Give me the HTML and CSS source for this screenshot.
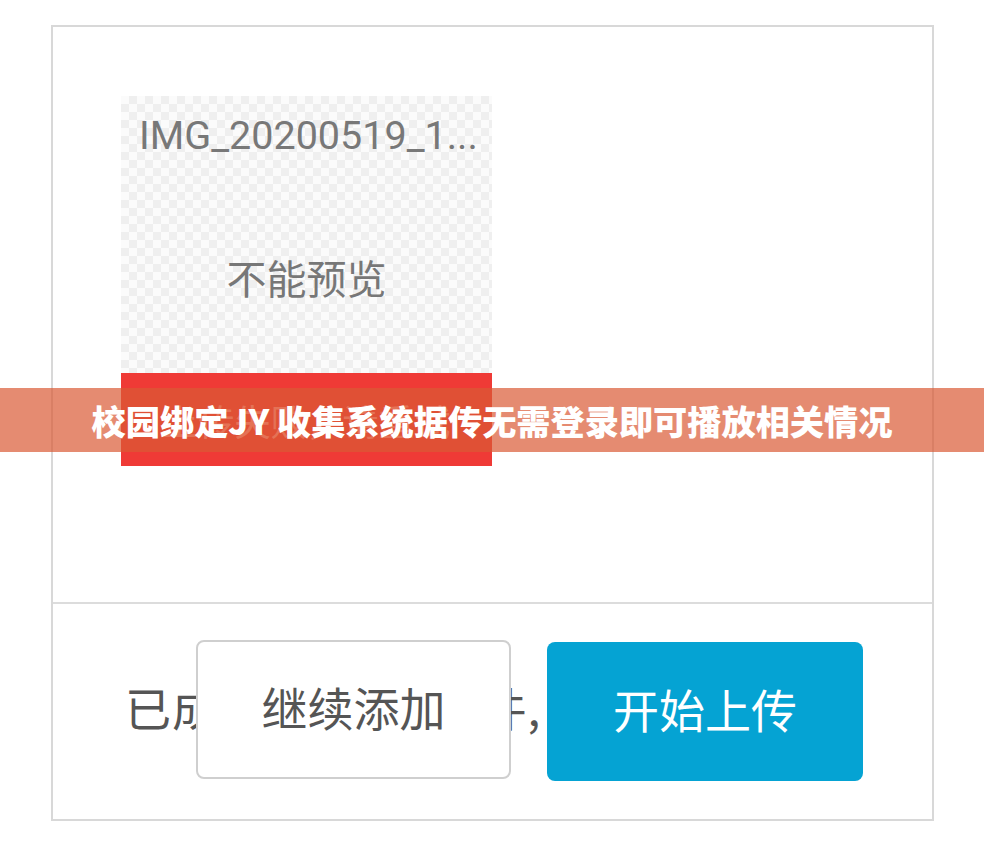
FILE: index.html
```html
<!DOCTYPE html>
<html lang="zh">
<head>
<meta charset="utf-8">
<title>上传</title>
<link rel="stylesheet" href="styles.css">
</head>
<body>
<div class="card">
  <div class="card-top">
    <div class="thumb">
      <div class="thumb-name">IMG_20200519_1...</div>
      <div class="thumb-preview">不能预览</div>
      <div class="thumb-error">上传失败，请重试</div>
    </div>
  </div>
  <div class="divider"></div>
  <div class="card-bottom">
    <span class="status">已成功添加1个文件,</span>
    <button class="btn btn-primary">开始上传</button>
    <button class="btn btn-add">继续添加</button>
  </div>
</div>
<div class="banner">校园绑定JY 收集系统据传无需登录即可播放相关情况</div>
</body>
</html>
```
FILE: styles.css
```css
html, body {
  margin: 0;
  padding: 0;
  background: #ffffff;
  font-family: "Noto Sans CJK SC", "Noto Sans", sans-serif;
}
body {
  width: 984px;
  height: 842px;
  position: relative;
  overflow: hidden;
}
.card {
  box-sizing: border-box;
  width: 883px;
  height: 796px;
  margin: 25px 0 0 51px;
  border: 2px solid #d8d8d8;
  display: flex;
  flex-direction: column;
}
.card-top {
  height: 575px;
  padding: 69px 0 0 68px;
  box-sizing: border-box;
}
.thumb {
  width: 371px;
  height: 370px;
  display: flex;
  flex-direction: column;
  background-color: #fbfbfb;
  background-image: conic-gradient(#efefef 25%, transparent 0 50%, #efefef 0 75%, transparent 0);
  background-size: 16px 16px;
}
.thumb-name {
  margin-top: 17px;
  padding-left: 4px;
  line-height: 46px;
  text-align: center;
  font-family: Roboto, "Noto Sans", sans-serif;
  font-size: 39.5px;
  color: #787878;
}
.thumb-preview {
  flex: 1;
  display: flex;
  align-items: center;
  justify-content: center;
  padding-top: 22px;
  font-size: 40px;
  color: #777777;
}
.thumb-error {
  height: 93px;
  box-sizing: border-box;
  padding-top: 22px;
  background: #ef3a36;
  color: rgba(255, 210, 200, 0.75);
  font-size: 36px;
  text-align: center;
  line-height: 50px;
}
.divider {
  height: 2px;
  background: #dcdcdc;
}
.card-bottom {
  flex: 1;
  position: relative;
  display: flex;
  align-items: center;
  padding-left: 72px;
}
.status {
  font-size: 46px;
  color: #555555;
  white-space: nowrap;
  letter-spacing: 1px;
  margin-top: -12px;
}
.btn {
  font-family: "Noto Sans CJK SC", "Noto Sans", sans-serif;
  font-size: 46px;
  box-sizing: border-box;
  width: 316px;
  height: 139px;
  border-radius: 8px;
  padding: 0 0 8px 0;
  margin: 0;
}
.btn-primary {
  margin-left: auto;
  margin-right: 69px;
  background: #05a3d3;
  border: none;
  color: #ffffff;
}
.btn-add {
  position: absolute;
  left: 143px;
  top: 36px;
  width: 315px;
  background: #ffffff;
  border: 2px solid #cfcfcf;
  color: #555555;
}
.banner {
  position: absolute;
  left: 0;
  top: 388px;
  width: 984px;
  height: 64px;
  background: rgba(218, 90, 52, 0.7);
  color: #ffffff;
  font-weight: 900;
  font-size: 34.2px;
  line-height: 64px;
  text-align: center;
  white-space: nowrap;
}
```
